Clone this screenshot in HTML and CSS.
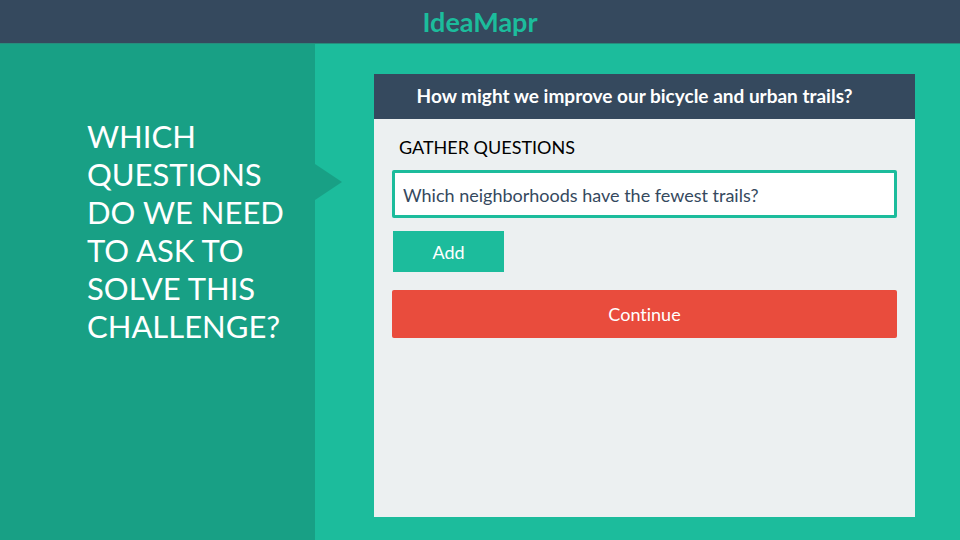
FILE: index.html
```html
<!DOCTYPE html>
<html lang="en">
<head>
<meta charset="utf-8">
<meta name="viewport" content="width=device-width, initial-scale=1">
<title>IdeaMapr</title>
<link rel="stylesheet" href="styles.css">
</head>
<body>
<header class="topbar"><span class="brand">IdeaMapr</span></header>
<div class="layout">
  <aside class="prompt">
    <h1 class="prompt-text">Which<br>questions<br>do we need<br>to ask to<br>solve this<br>challenge?</h1>
  </aside>
  <main class="stage">
    <section class="card">
      <h2 class="card-title">How might we improve our bicycle and urban trails?</h2>
      <form class="card-body">
        <label class="field-label" for="question">GATHER QUESTIONS</label>
        <input class="field" id="question" type="text" value="Which neighborhoods have the fewest trails?">
        <button class="button add" type="button">Add</button>
        <button class="button continue" type="button">Continue</button>
      </form>
    </section>
  </main>
</div>
</body>
</html>
```
FILE: styles.css
```css
* {
  box-sizing: border-box;
}

body {
  display: flex;
  flex-direction: column;
  min-height: 100vh;
  margin: 0;
  background: #1cbc9c;
  font-family: Lato, "Liberation Sans", sans-serif;
  font-variant-ligatures: none;
}

.topbar {
  padding: 6px 0 5px;
  border-bottom: 1px solid #278c7c;
  background: #35495e;
  color: #1cbc9c;
  text-align: center;
}

.brand {
  display: block;
  font-size: 27px;
  font-weight: 700;
  line-height: 32px;
}

.layout {
  display: grid;
  grid-template-columns: 315px 1fr;
  flex: 1;
}

.prompt {
  position: relative;
  padding: 73px 24px 24px 87px;
  background: #18a085;
  color: #fff;
}

.prompt::after {
  content: "";
  position: absolute;
  top: 120px;
  left: 100%;
  width: 27px;
  height: 36px;
  background: #18a085;
  clip-path: polygon(0 0, 100% 50%, 0 100%);
}

.prompt-text {
  margin: 0;
  font-size: 31px;
  font-weight: 400;
  line-height: 38px;
  text-transform: uppercase;
  white-space: nowrap;
}

.stage {
  display: flex;
  padding: 30px 45px 23px 59px;
}

.card {
  flex: 1;
  background: #ecf0f1;
}

.card-title {
  margin: 0;
  padding: 0 40px 2px 20px;
  background: #35495e;
  color: #fff;
  font-size: 19px;
  font-weight: 700;
  line-height: 43px;
  text-align: center;
}

.card-body {
  display: flex;
  flex-direction: column;
  padding: 16px 18px;
}

.field-label {
  margin: 0 7px 11px;
  color: #000;
  font-size: 18px;
  line-height: 24px;
}

.field {
  height: 48px;
  margin: 0 0 13px;
  padding: 1px 8px 0;
  border: 3px solid #1cbc9c;
  border-radius: 2px;
  background: #fff;
  color: #35495e;
  font: inherit;
  font-size: 18px;
  font-variant-ligatures: none;
}

.button {
  padding: 0;
  border: 0;
  color: #fff;
  font: inherit;
  font-size: 18px;
  font-variant-ligatures: none;
}

.add {
  align-self: flex-start;
  width: 111px;
  height: 41px;
  margin: 0 0 18px 1px;
  background: #1cbc9c;
}

.continue {
  height: 48px;
  border-radius: 2px;
  background: #e94c3d;
}
```
